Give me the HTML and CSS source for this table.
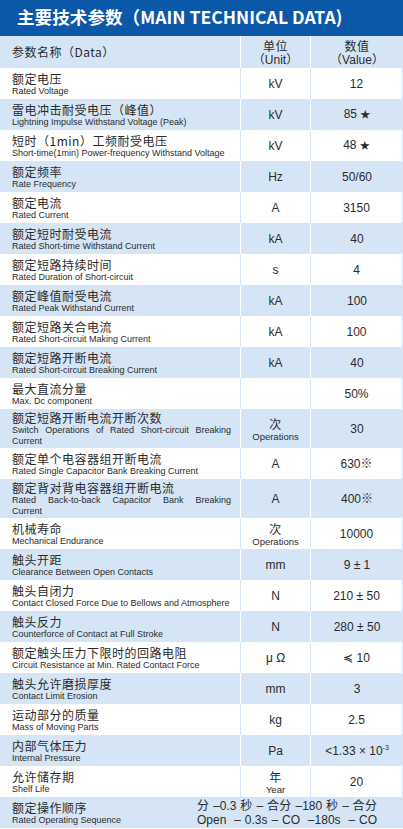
FILE: index.html
```html
<!DOCTYPE html>
<html lang="zh">
<head>
<meta charset="utf-8">
<title>主要技术参数</title>
<link rel="stylesheet" href="styles.css">
</head>
<body>
<div class="page">
  <div class="title">主要技术参数（MAIN TECHNICAL DATA)</div>
  <table class="spec">
    <colgroup><col class="c1"><col class="c2"><col class="c3"></colgroup>
    <thead>
      <tr>
        <th class="name">参数名称（Data）</th>
        <th><span class="cn">单位</span><span class="hu">（Unit）</span></th>
        <th><span class="cn">数值</span><span class="hu">（Value）</span></th>
      </tr>
    </thead>
    <tbody>
      <tr><td class="name"><span class="cn">额定电压</span><span class="en">Rated Voltage</span></td><td>kV</td><td>12</td></tr>
      <tr><td class="name"><span class="cn">雷电冲击耐受电压（峰值）</span><span class="en">Lightning Impulse Withstand Voltage (Peak)</span></td><td>kV</td><td>85 <span class="star">★</span></td></tr>
      <tr><td class="name"><span class="cn">短时（1min）工频耐受电压</span><span class="en">Short-time(1min) Power-frequency Withstand Voltage</span></td><td>kV</td><td>48 <span class="star">★</span></td></tr>
      <tr><td class="name"><span class="cn">额定频率</span><span class="en">Rate Frequency</span></td><td>Hz</td><td>50/60</td></tr>
      <tr><td class="name"><span class="cn">额定电流</span><span class="en">Rated Current</span></td><td>A</td><td>3150</td></tr>
      <tr><td class="name"><span class="cn">额定短时耐受电流</span><span class="en">Rated Short-time Withstand Current</span></td><td>kA</td><td>40</td></tr>
      <tr><td class="name"><span class="cn">额定短路持续时间</span><span class="en">Rated Duration of Short-circuit</span></td><td>s</td><td>4</td></tr>
      <tr><td class="name"><span class="cn">额定峰值耐受电流</span><span class="en">Rated Peak Withstand Current</span></td><td>kA</td><td>100</td></tr>
      <tr><td class="name"><span class="cn">额定短路关合电流</span><span class="en">Rated Short-circuit Making Current</span></td><td>kA</td><td>100</td></tr>
      <tr><td class="name"><span class="cn">额定短路开断电流</span><span class="en">Rated Short-circuit Breaking Current</span></td><td>kA</td><td>40</td></tr>
      <tr><td class="name"><span class="cn">最大直流分量</span><span class="en">Max. Dc component</span></td><td></td><td>50%</td></tr>
      <tr class="tall"><td class="name"><span class="cn">额定短路开断电流开断次数</span><span class="en just">Switch Operations of Rated Short-circuit Breaking</span><span class="en">Current</span></td><td><span class="cn">次</span><span class="en">Operations</span></td><td>30</td></tr>
      <tr><td class="name"><span class="cn">额定单个电容器组开断电流</span><span class="en">Rated Single Capacitor Bank Breaking Current</span></td><td>A</td><td>630※</td></tr>
      <tr class="tall"><td class="name"><span class="cn">额定背对背电容器组开断电流</span><span class="en just">Rated Back-to-back Capacitor Bank Breaking</span><span class="en">Current</span></td><td>A</td><td>400※</td></tr>
      <tr><td class="name"><span class="cn">机械寿命</span><span class="en">Mechanical Endurance</span></td><td><span class="cn">次</span><span class="en">Operations</span></td><td>10000</td></tr>
      <tr><td class="name"><span class="cn">触头开距</span><span class="en">Clearance Between Open Contacts</span></td><td>mm</td><td>9 ± 1</td></tr>
      <tr><td class="name"><span class="cn">触头自闭力</span><span class="en">Contact Closed Force Due to Bellows and Atmosphere</span></td><td>N</td><td>210 ± 50</td></tr>
      <tr><td class="name"><span class="cn">触头反力</span><span class="en">Counterforce of Contact at Full Stroke</span></td><td>N</td><td>280 ± 50</td></tr>
      <tr><td class="name"><span class="cn">额定触头压力下限时的回路电阻</span><span class="en">Circuit Resistance at Min. Rated Contact Force</span></td><td>μ Ω</td><td>≼ 10</td></tr>
      <tr><td class="name"><span class="cn">触头允许磨损厚度</span><span class="en">Contact Limit Erosion</span></td><td>mm</td><td>3</td></tr>
      <tr><td class="name"><span class="cn">运动部分的质量</span><span class="en">Mass of Moving Parts</span></td><td>kg</td><td>2.5</td></tr>
      <tr><td class="name"><span class="cn">内部气体压力</span><span class="en">Internal Pressure</span></td><td>Pa</td><td>&lt;1.33 × 10<sup>-3</sup></td></tr>
      <tr><td class="name"><span class="cn">允许储存期</span><span class="en">Shelf Life</span></td><td><span class="cn">年</span><span class="en">Year</span></td><td>20</td></tr>
      <tr class="last">
        <td colspan="3" class="name">
          <div class="seqrow">
            <div class="seqlabel"><span class="cn">额定操作顺序</span><span class="en">Rated Operating Sequence</span></div>
            <div class="seq"><span class="line">分 –0.3 秒 – 合分 –180 秒 – 合分</span><span class="line">Open&nbsp; – 0.3s – CO&nbsp; –180s&nbsp; – CO</span></div>
          </div>
        </td>
      </tr>
    </tbody>
  </table>
</div>
</body>
</html>
```
FILE: styles.css
```css
html, body {
  margin: 0;
  padding: 0;
  background: #ffffff;
}

.page {
  width: 403px;
  font-family: "Liberation Sans", Arial, "Noto Sans CJK SC", sans-serif;
  color: #2b2b2b;
}

.title {
  height: 36px;
  box-sizing: border-box;
  padding: 4px 0 0 17px;
  background: #0b57a8;
  color: #ffffff;
  font-family: "Noto Sans CJK SC", sans-serif;
  font-weight: 700;
  font-size: 17.6px;
  line-height: 25px;
  white-space: nowrap;
}

.spec {
  width: 403px;
  table-layout: fixed;
  border-collapse: separate;
  border-spacing: 0;
}

.c1 { width: 240px; }
.c2 { width: 70px; }
.c3 { width: 93px; }

.spec th,
.spec td {
  padding: 0;
  text-align: center;
  vertical-align: middle;
  font-weight: 400;
  font-size: 12px;
  line-height: 14px;
  height: 31px;
  box-sizing: border-box;
}

.spec th {
  height: 32px;
  background: #d5e5f5;
}

.spec th + th,
.spec td + td {
  border-left: 1px solid #ffffff;
}

.spec tbody tr:nth-child(odd) td {
  background: #ffffff;
}
.spec tbody tr:nth-child(odd) td + td {
  border-left-color: #d5e5f5;
}
.spec tbody tr:nth-child(odd) td:last-child {
  border-right: 1px solid #d5e5f5;
}
.spec tbody tr:nth-child(even) td {
  background: #d5e5f5;
}

.spec .name {
  text-align: left;
  padding: 0 9px 0 12px;
}

.cn {
  display: block;
  font-family: "Noto Sans CJK SC", sans-serif;
  font-size: 12px;
  line-height: 15px;
  letter-spacing: 0.5px;
}

th .cn {
  line-height: 16px;
}

.hu {
  display: block;
  font-family: "Liberation Sans", "Noto Sans CJK SC", sans-serif;
  font-size: 12px;
  line-height: 13px;
}

th.name {
  font-family: "Noto Sans CJK SC", sans-serif;
  letter-spacing: 0.5px;
}

.en {
  display: block;
  font-family: "Liberation Sans", Arial, sans-serif;
  font-size: 9px;
  line-height: 11px;
  letter-spacing: 0;
}

td:not(.name) .en {
  font-size: 9.5px;
}

.just {
  text-align: justify;
  text-align-last: justify;
}

.spec tr.tall td {
  height: 39px;
}

.star {
  font-size: 10px;
}

sup {
  font-size: 7px;
  line-height: 0;
  vertical-align: 5px;
}

.seqrow {
  display: flex;
  align-items: center;
}

.seqlabel {
  width: 185px;
}

.seq {
  width: 180px;
  font-family: "Liberation Sans", "Noto Sans CJK SC", sans-serif;
  font-size: 12px;
  line-height: 14px;
}

.seq .line {
  display: block;
  text-align: justify;
  text-align-last: justify;
}
```
